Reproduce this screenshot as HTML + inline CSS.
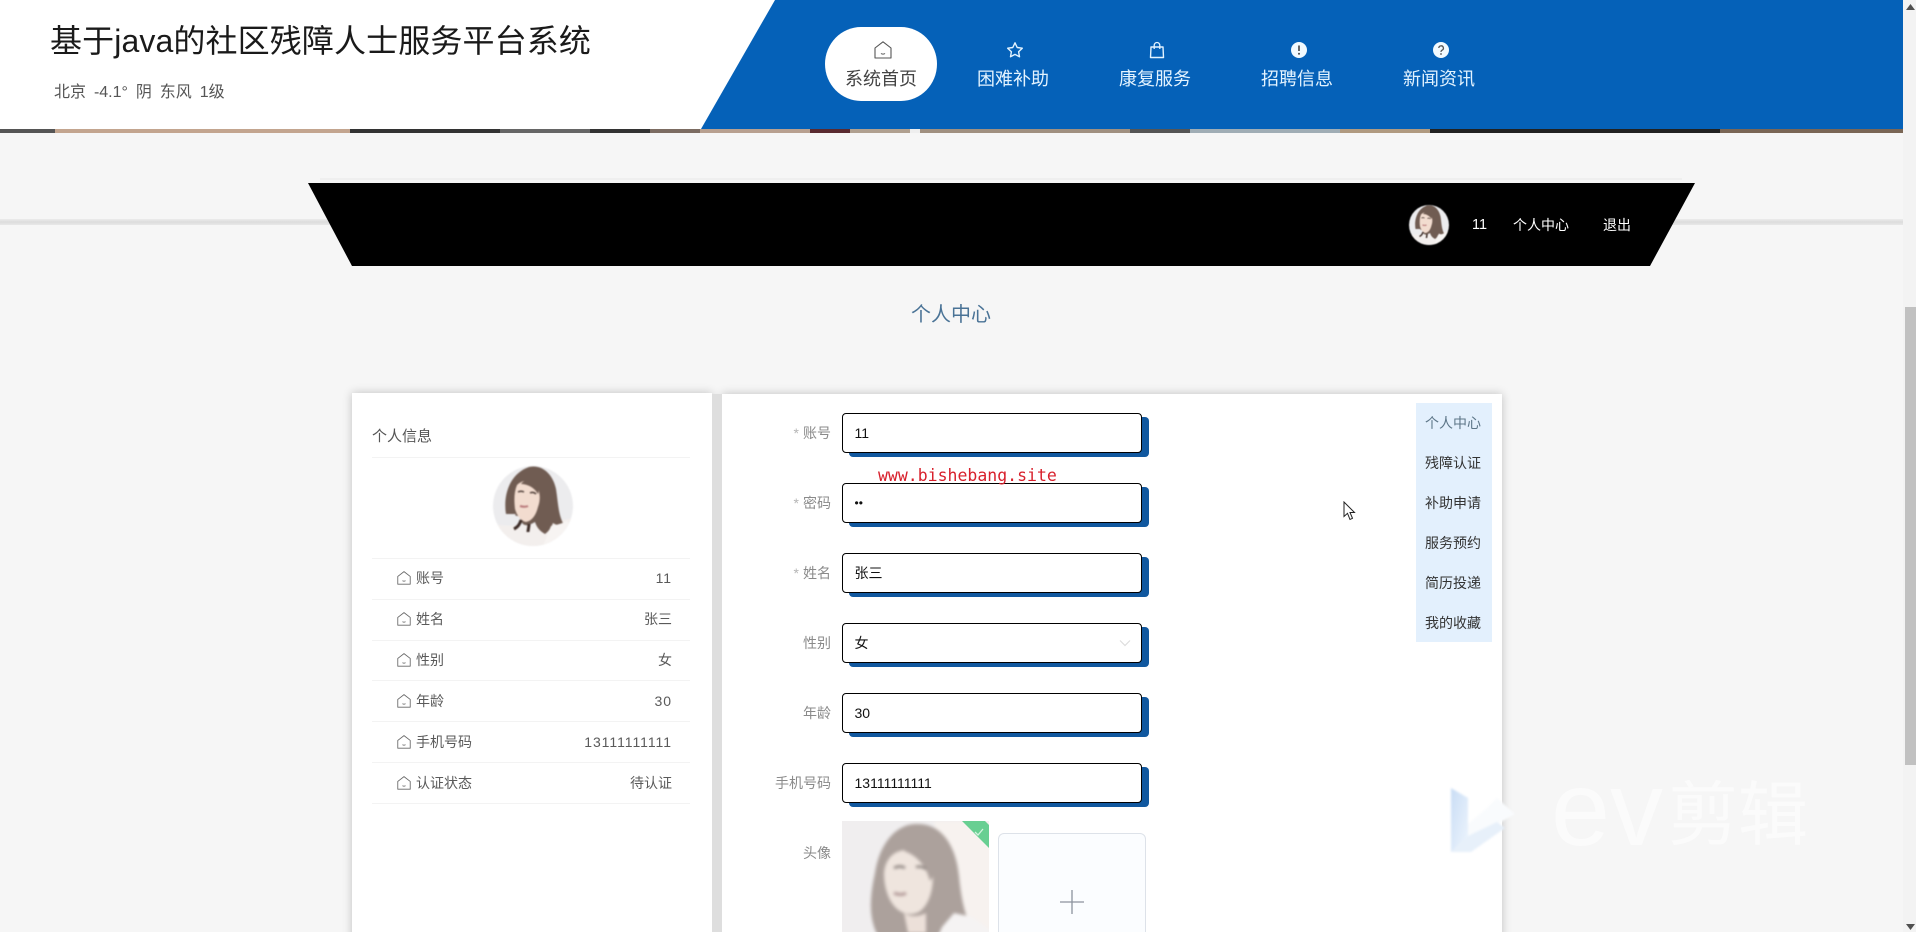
<!DOCTYPE html>
<html lang="zh-CN">
<head>
<meta charset="utf-8">
<title>基于java的社区残障人士服务平台系统</title>
<style>
html,body{margin:0;padding:0;width:1916px;height:932px;overflow:hidden;background:#f6f6f6;}
body{position:relative;font-family:"Liberation Sans","Noto Sans CJK SC",sans-serif;color:#333;filter:blur(.35px);}
.a{position:absolute;white-space:nowrap;}
.strip{left:0;top:129px;width:1903px;height:4px;background:linear-gradient(90deg,#555 0 55px,#c3a58f 55px 350px,#333 350px 500px,#666 500px 590px,#333 590px 650px,#7c6c62 650px 700px,#b8a090 700px 810px,#5a2a30 810px 850px,#b0a090 850px 910px,#eee 910px 920px,#a09080 920px 1130px,#555 1130px 1190px,#a0adb5 1190px 1340px,#b09a80 1340px 1430px,#222 1430px 1720px,#7a6655 1720px 1903px);}
.line{left:0;top:219px;width:1903px;height:6px;background:linear-gradient(180deg,#ececec,#dcdcdc 50%,#e8e8e8);}
.nav{top:69px;width:100px;text-align:center;font-size:18px;line-height:20px;color:#e3f3ff;}
.ic{position:absolute;top:41px;width:18px;height:18px;}
.card{background:#fff;box-shadow:0 0 9px rgba(0,0,0,.22);}
.row{left:372px;width:318px;height:41px;line-height:40px;font-size:14px;color:#5a5a5a;}
.row svg{position:absolute;left:25px;top:13px;width:14px;height:14px;}
.row .l{position:absolute;left:44px;}
.row .v{position:absolute;right:18px;}
.row .n{letter-spacing:.95px;}
.hr{left:372px;width:318px;height:1px;background:#f3f3f3;}
.lab{left:760px;width:71px;text-align:right;font-size:14px;line-height:20px;color:#8a8a8a;}
.lab i{font-style:normal;color:#b5b5b5;margin-right:4px;}
.inp{left:842px;width:298px;height:38px;border:1px solid #000;border-radius:4px;background:#fff;box-shadow:7px 4px 0 #11589f;font-size:14px;line-height:38px;color:#111;text-indent:11.5px;}
.side{left:1425px;font-size:14px;line-height:20px;color:#333;}
</style>
</head>
<body>
<svg width="0" height="0" style="position:absolute">
<defs>
<symbol id="home" viewBox="0 0 18 18"><path d="M9 .8 17 7V17H1V7Z" fill="none" stroke="currentColor" stroke-width="1.100" stroke-linejoin="round"/><path d="M7 12.500c1 .8 3 .8 4 0" fill="none" stroke="currentColor" stroke-width="1"/></symbol>
<symbol id="face" viewBox="0 0 80 80">
<clipPath id="cc"><circle cx="40" cy="40" r="40"/></clipPath>
<g clip-path="url(#cc)">
<rect width="80" height="80" fill="#ececee"/>
<path d="M0 58C18 62 50 58 80 52V80H0Z" fill="#f3efed"/>
<path d="M13 48C10 30 16 8 36 1c14-3 24 8 27 22 2 12 2 26 8 36-5 1-8 0-11-2-2 5-5 9-8 11-5-3-8-6-10-12-4 2-7 4-10 3-4-1-4-6-6-9-3 0-5-1-3-2Z" fill="#705c52"/>
<path d="M24 19c6-6 14-5 19 0 4 6 5 14 2 22-2 8-6 14-12 15-5-1-9-6-11-13-1-9-1-17 2-24Z" fill="#f2dccf"/>
<path d="M28 18c6 0 13 3 17 10 2-6 0-12-4-14-5-2-10 0-13 4Z" fill="#705c52"/>
<path d="M25 26c2-1 4-1 6 0M37 27c2-1 4-1 6 1" stroke="#4a3a34" stroke-width="1.500" fill="none"/>
<path d="M27 40c3 1 6 1 8 0" stroke="#b9797a" stroke-width="2" fill="none"/>
<path d="M28 54c-1 4-3 7-7 9M36 58c0 3-1 6-1 8" stroke="#3c2b26" stroke-width="3" fill="none"/>
<path d="M58 60c6-1 12-3 16-5l6 8v17H50Z" fill="#f7f4f2"/>
</g>
</symbol>
</defs>
</svg>

<div class="a strip"></div>
<div class="a" style="left:0;top:0;width:790px;height:129px;background:#fff;"></div>
<svg class="a" style="left:0;top:0" width="1903" height="129"><polygon points="775,0 1903,0 1903,129 701,129" fill="#0561b8"/></svg>

<div class="a" style="left:50px;top:20px;font-size:32px;line-height:42px;color:#1a1a1a;letter-spacing:.12px;">基于java的社区残障人士服务平台系统</div>
<div class="a" style="left:54px;top:83px;font-size:16px;line-height:20px;color:#555;word-spacing:3.500px;">北京 -4.1° 阴 东风 1级</div>

<div class="a" style="left:825px;top:27px;width:112px;height:74px;border-radius:37px/38px;background:#fff;"></div>
<svg class="ic" style="left:874px;color:#555"><use href="#home"/></svg>
<svg class="ic" style="left:1006px;" viewBox="0 0 18 18"><path d="M9 1.800l2.200 4.700 5.100.7-3.700 3.500.9 5.100L9 13.400l-4.500 2.400.9-5.100L1.700 7.200l5.100-.7Z" fill="none" stroke="#e3f3ff" stroke-width="1.400" stroke-linejoin="round"/></svg>
<svg class="ic" style="left:1148px;" viewBox="0 0 18 18"><path d="M3 6H15L15.500 16.500H2.500Z" fill="none" stroke="#e3f3ff" stroke-width="1.400" stroke-linejoin="round"/><path d="M6.200 8V4.300a2.800 2.800 0 0 1 5.600 0V8" fill="none" stroke="#e3f3ff" stroke-width="1.300"/></svg>
<svg class="ic" style="left:1290px;" viewBox="0 0 18 18"><circle cx="9" cy="9" r="8" fill="#f2faff"/><path d="M9 4.500V10" stroke="#444" stroke-width="1.600"/><circle cx="9" cy="12.700" r="1" fill="#444"/></svg>
<svg class="ic" style="left:1432px;" viewBox="0 0 18 18"><circle cx="9" cy="9" r="8" fill="#f2faff"/><path d="M6.800 7a2.300 2.300 0 1 1 3.300 2.200c-.8.400-1.100.8-1.100 1.700" fill="none" stroke="#555" stroke-width="1.300"/><circle cx="9" cy="13" r=".9" fill="#555"/></svg>

<div class="a nav" style="left:831px;color:#444;">系统首页</div>
<div class="a nav" style="left:963px;">困难补助</div>
<div class="a nav" style="left:1105px;">康复服务</div>
<div class="a nav" style="left:1247px;">招聘信息</div>
<div class="a nav" style="left:1389px;">新闻资讯</div>

<div class="a line"></div>
<div class="a" style="left:320px;top:178px;width:1362px;height:2px;background:#efefef;"></div>
<svg class="a" style="left:300px;top:183px" width="1400" height="83"><polygon points="8,0 1395,0 1350,83 52,83" fill="#000"/></svg>
<svg class="a" style="left:1409px;top:205px;filter:blur(.5px)" width="40" height="40"><use href="#face" width="40" height="40"/></svg>
<div class="a" style="left:1472px;top:215px;font-size:14.500px;line-height:20px;color:#fff;">11</div>
<div class="a" style="left:1513px;top:215px;font-size:14px;line-height:20px;color:#fff;">个人中心</div>
<div class="a" style="left:1603px;top:215px;font-size:14px;line-height:20px;color:#fff;">退出</div>

<div class="a" style="left:911px;top:301px;font-size:20px;line-height:28px;color:#4a7396;">个人中心</div>

<div class="a card" style="left:352px;top:393px;width:360px;height:560px;"></div>
<div class="a card" style="left:722px;top:394px;width:780px;height:560px;"></div>
<div class="a" style="left:712px;top:394px;width:10px;height:538px;background:#dedede;"></div>

<div class="a" style="left:372px;top:427px;font-size:15px;line-height:20px;color:#555;">个人信息</div>
<div class="a hr" style="top:457px;"></div>
<svg class="a" style="left:493px;top:466px;filter:blur(.7px)" width="80" height="80"><use href="#face" width="80" height="80"/></svg>
<div class="a hr" style="top:558px;"></div>

<div class="a row" style="top:558px;"><svg style="color:#666"><use href="#home"/></svg><span class="l">账号</span><span class="v n">11</span></div>
<div class="a hr" style="top:599px;"></div>
<div class="a row" style="top:599px;"><svg style="color:#666"><use href="#home"/></svg><span class="l">姓名</span><span class="v">张三</span></div>
<div class="a hr" style="top:640px;"></div>
<div class="a row" style="top:640px;"><svg style="color:#666"><use href="#home"/></svg><span class="l">性别</span><span class="v">女</span></div>
<div class="a hr" style="top:680px;"></div>
<div class="a row" style="top:681px;"><svg style="color:#666"><use href="#home"/></svg><span class="l">年龄</span><span class="v n">30</span></div>
<div class="a hr" style="top:721px;"></div>
<div class="a row" style="top:722px;"><svg style="color:#666"><use href="#home"/></svg><span class="l">手机号码</span><span class="v n">13111111111</span></div>
<div class="a hr" style="top:762px;"></div>
<div class="a row" style="top:763px;"><svg style="color:#666"><use href="#home"/></svg><span class="l">认证状态</span><span class="v">待认证</span></div>
<div class="a hr" style="top:803px;"></div>

<div class="a lab" style="top:423px;"><i>*</i>账号</div>
<div class="a lab" style="top:493px;"><i>*</i>密码</div>
<div class="a lab" style="top:563px;"><i>*</i>姓名</div>
<div class="a lab" style="top:633px;">性别</div>
<div class="a lab" style="top:703px;">年龄</div>
<div class="a lab" style="top:773px;">手机号码</div>
<div class="a lab" style="top:843px;">头像</div>

<div class="a inp" style="top:413px;">11</div>
<div class="a inp" style="top:483px;font-size:12px;">••</div>
<div class="a inp" style="top:553px;">张三</div>
<div class="a inp" style="top:623px;">女<svg style="position:absolute;left:275px;top:15px" width="14" height="8" viewBox="0 0 14 8"><path d="M2 1.500 7 6.500 12 1.500" fill="none" stroke="#ddd" stroke-width="1.200"/></svg></div>
<div class="a inp" style="top:693px;">30</div>
<div class="a inp" style="top:763px;">13111111111</div>
<div class="a" style="left:878px;top:466px;font-family:'DejaVu Sans Mono','Liberation Mono',monospace;font-size:16.500px;line-height:20px;color:#d8202c;">www.bishebang.site</div>

<svg class="a" style="left:842px;top:821px" width="147" height="111" viewBox="0 0 147 111">
<g style="filter:blur(1.500px)">
<rect x="-4" y="-4" width="155" height="119" fill="#f0eeef"/>
<path d="M92 0H151V111H110Z" fill="#f7f2ef"/>
<path d="M36 115C26 96 28 75 33 52 38 20 56 2 76 3c24 0 38 22 41 52 2 20 5 40 16 60Z" fill="#aca19c"/>
<path d="M42 52c1-14 10-24 26-23 14 1 23 12 23 26 0 16-5 30-14 36-10 5-22 1-29-12-4-8-6-17-6-27Z" fill="#efe5de"/>
<path d="M62 30c12 4 22 14 26 30 6-6 6-20-2-30-8-6-18-6-24 0Z" fill="#aca19c"/>
<path d="M52 47c4-2 8-2 11 0M74 46c4-1 7 0 10 2" stroke="#8f8682" stroke-width="2.500" fill="none"/>
<path d="M52 72c4 2 9 2 12 0" stroke="#b39a99" stroke-width="3" fill="none"/>
<path d="M100 106l12-14 18 4 21 15v4H96Z" fill="#f5f3f3"/>
<path d="M62 92c6 4 14 4 22 0v20H66Z" fill="#ece0d9"/>
</g>
<polygon points="120,0 143,0 147,4 147,27" fill="#68cf92"/>
<path d="M133 11l3 3 5-6" stroke="#d3f2df" stroke-width="1.300" fill="none"/>
</svg>
<div class="a" style="left:998px;top:833px;width:146px;height:120px;border:1px solid #dde2e9;border-radius:6px;background:#fbfdff;"></div>
<svg class="a" style="left:1060px;top:890px" width="24" height="24"><path d="M0 12H24M12 0V24" stroke="#8c939d" stroke-width="1.300"/></svg>

<div class="a" style="left:1416px;top:403px;width:76px;height:239px;background:#e3f0fd;"></div>
<div class="a side" style="top:413px;color:#5d7688;">个人中心</div>
<div class="a side" style="top:453px;">残障认证</div>
<div class="a side" style="top:493px;">补助申请</div>
<div class="a side" style="top:533px;">服务预约</div>
<div class="a side" style="top:573px;">简历投递</div>
<div class="a side" style="top:613px;">我的收藏</div>

<svg class="a" style="left:1343px;top:501px" width="14" height="20" viewBox="0 0 14 20"><path d="M1 1V15.500L4.500 12.300 7 18.500 9.500 17.300 7 11.500H11.500Z" fill="#fff" stroke="#222" stroke-width="1"/></svg>

<svg class="a" style="left:1451px;top:786px;filter:blur(1px)" width="68" height="68" viewBox="0 0 68 68">
<defs><linearGradient id="g" x1="0" y1="0" x2="1" y2="1"><stop offset="0" stop-color="#c9ddf5"/><stop offset="1" stop-color="#eef5fd"/></linearGradient></defs>
<path d="M0 2 17 12V50L0 66Z" fill="url(#g)"/>
<path d="M17 50 50 36 64 28 46 12 36 22 17 38Z" fill="#f9fbfd"/>
<path d="M0 66 17 50 46 36 54 42 20 66Z" fill="#e7f0fa"/>
</svg>
<div class="a" style="left:1551px;top:756px;font-size:106px;line-height:106px;color:#fbfbfb;">ev</div>
<div class="a" style="left:1668px;top:780px;font-size:70px;line-height:70px;color:#fbfbfb;">剪辑</div>

<div class="a" style="left:1903px;top:0;width:13px;height:932px;background:#f3f3f3;"></div>
<div class="a" style="left:1905px;top:307px;width:11px;height:458px;background:#c1c1c1;"></div>
<svg class="a" style="left:1905px;top:4px" width="11" height="6"><path d="M5.500 0 10 6H1Z" fill="#505050"/></svg>
<svg class="a" style="left:1905px;top:924px" width="11" height="6"><path d="M5.500 6 10 0H1Z" fill="#505050"/></svg>
</body>
</html>
